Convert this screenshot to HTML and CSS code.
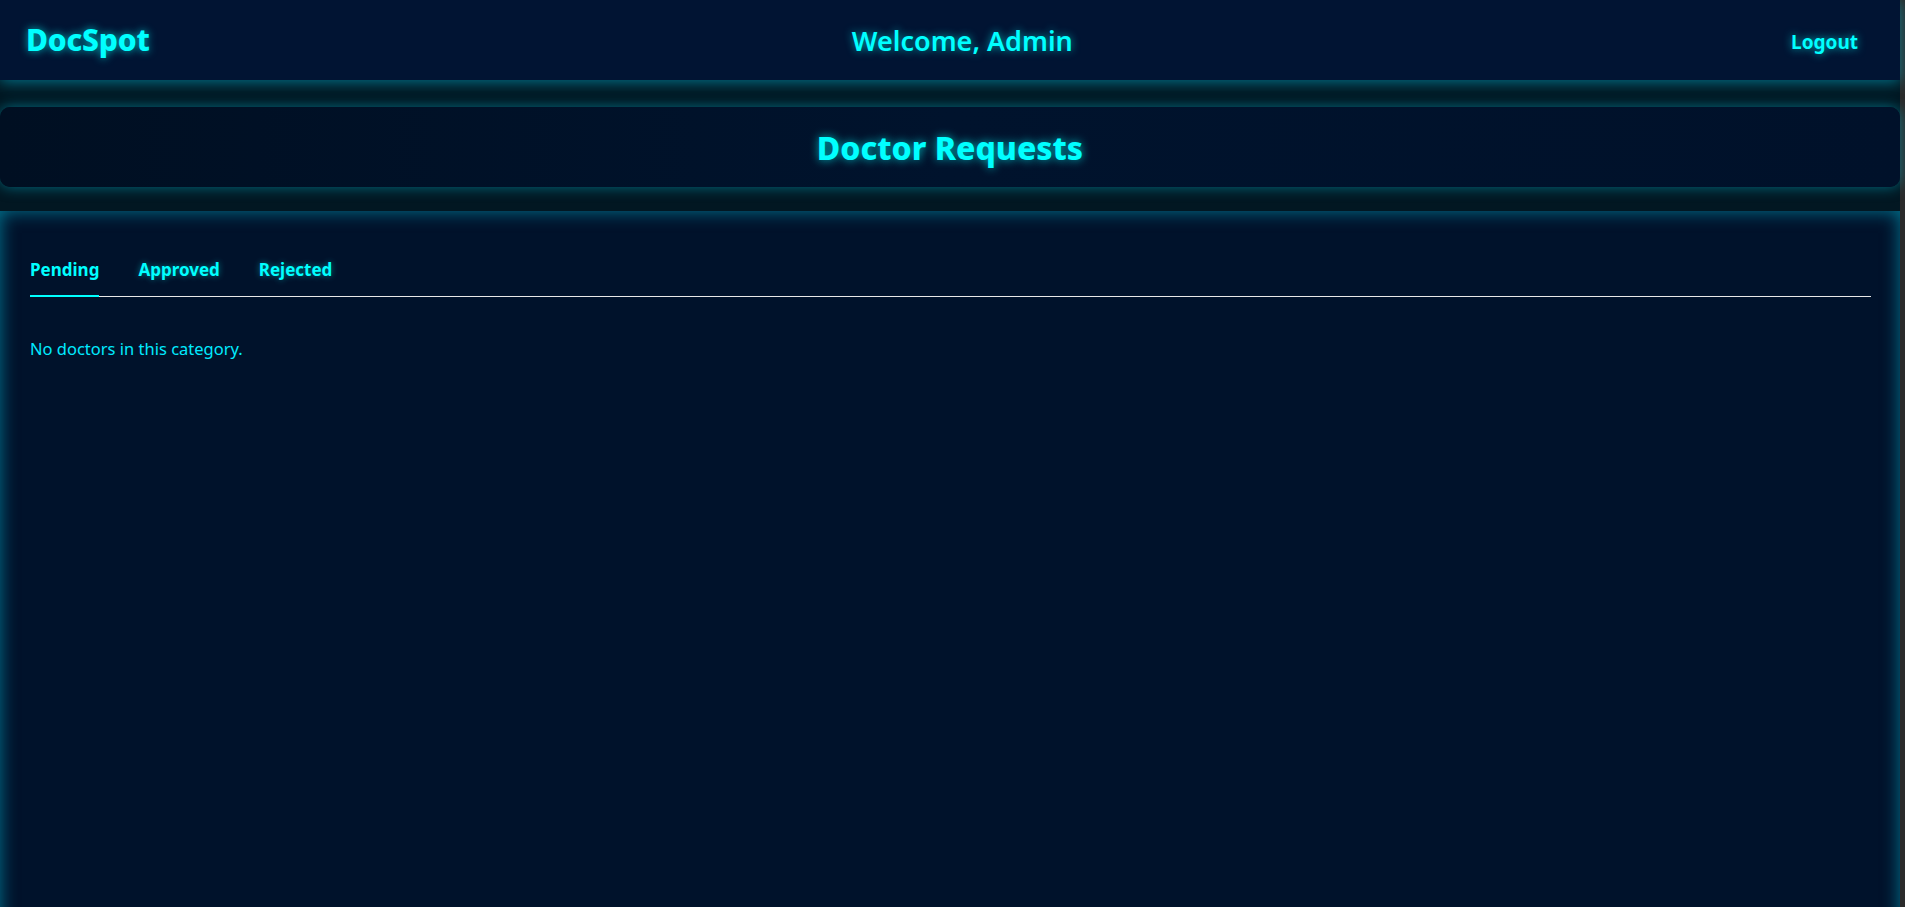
FILE: index.html
```html
<!DOCTYPE html>
<html lang="en">
<head>
<meta charset="utf-8">
<title>DocSpot - Doctor Requests</title>
<link rel="stylesheet" href="styles.css">
</head>
<body>
<div class="page">
  <header class="navbar">
    <div class="brand">DocSpot</div>
    <div class="welcome">Welcome, Admin</div>
    <button class="logout">Logout</button>
  </header>
  <div class="title-card">
    <h1 class="title">Doctor Requests</h1>
  </div>
  <main class="panel">
    <nav class="tabs">
      <button class="tab active">Pending</button>
      <button class="tab">Approved</button>
      <button class="tab">Rejected</button>
    </nav>
    <p class="empty">No doctors in this category.</p>
  </main>
</div>
</body>
</html>
```
FILE: styles.css
```css
html {
  background: #2b2b2b;
  overflow: hidden;
}
body {
  margin: 0;
  font-family: "Noto Sans", "Open Sans", sans-serif;
  color: #00ffff;
}
.page {
  margin-right: 5px;
  background: #021722;
  display: flex;
  flex-direction: column;
}
.navbar {
  height: 80px;
  flex: none;
  display: flex;
  align-items: center;
  justify-content: space-between;
  padding: 0 26px;
  background: #011433;
  box-shadow: 0 2px 14px rgba(0, 190, 220, 0.55);
  position: relative;
  z-index: 2;
}
.brand {
  font-size: 30px;
  font-weight: 800;
  letter-spacing: -0.2px;
  text-shadow: 0 0 8px rgba(0, 255, 255, 0.7);
  margin-top: -2px;
}
.welcome {
  font-size: 27px;
  font-weight: 600;
  text-shadow: 0 0 8px rgba(0, 255, 255, 0.6);
  margin-top: 0;
}
.logout {
  background: transparent;
  border: none;
  color: #00ffff;
  font-family: inherit;
  font-size: 19px;
  font-weight: 700;
  padding: 8px 16px;
  margin-top: 4px;
  text-shadow: 0 0 8px rgba(0, 255, 255, 0.7);
  cursor: pointer;
}
.title-card {
  margin-top: 27px;
  height: 80px;
  flex: none;
  border-radius: 10px;
  background: linear-gradient(90deg, #000f22 0%, #00132d 50%, #00112a 100%);
  box-shadow: 0 0 14px rgba(0, 190, 220, 0.5);
  display: flex;
  align-items: center;
  justify-content: center;
  position: relative;
  z-index: 1;
}
.title {
  margin: 0;
  font-size: 32px;
  font-weight: 800;
  text-shadow: 0 0 10px rgba(0, 255, 255, 0.7);
}
.panel {
  margin-top: 24px;
  min-height: 740px;
  background: #00122b;
  box-shadow: inset 0 0 18px rgba(0, 200, 230, 0.55);
  padding: 35px 29px 0 30px;
}
.tabs {
  display: flex;
  gap: 39px;
  border-bottom: 1px solid #e8e8e8;
}
.tab {
  background: transparent;
  border: none;
  border-bottom: 2px solid transparent;
  margin-bottom: -1px;
  padding: 12px 0 14px;
  color: #00ffff;
  font-family: inherit;
  font-size: 17px;
  font-weight: 700;
  text-shadow: 0 0 6px rgba(0, 255, 255, 0.45);
  cursor: pointer;
}
.tab.active {
  border-bottom-color: #00ffff;
  text-shadow: none;
}
.empty {
  margin: 40px 0 0;
  font-size: 16.5px;
  color: #00eaff;
}
```
